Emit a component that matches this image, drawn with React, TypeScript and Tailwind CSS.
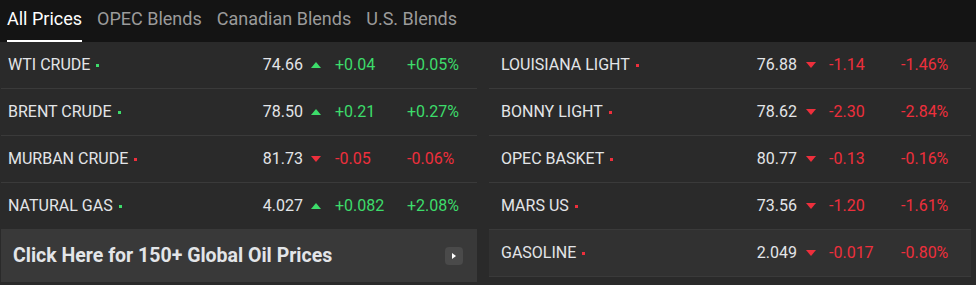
import React from "react";

type Quote = { name: string; price: string; change: string; pct: string; up: boolean };

const left: Quote[] = [
  { name: "WTI CRUDE", price: "74.66", change: "+0.04", pct: "+0.05%", up: true },
  { name: "BRENT CRUDE", price: "78.50", change: "+0.21", pct: "+0.27%", up: true },
  { name: "MURBAN CRUDE", price: "81.73", change: "-0.05", pct: "-0.06%", up: false },
  { name: "NATURAL GAS", price: "4.027", change: "+0.082", pct: "+2.08%", up: true },
];

const right: Quote[] = [
  { name: "LOUISIANA LIGHT", price: "76.88", change: "-1.14", pct: "-1.46%", up: false },
  { name: "BONNY LIGHT", price: "78.62", change: "-2.30", pct: "-2.84%", up: false },
  { name: "OPEC BASKET", price: "80.77", change: "-0.13", pct: "-0.16%", up: false },
  { name: "MARS US", price: "73.56", change: "-1.20", pct: "-1.61%", up: false },
  { name: "GASOLINE", price: "2.049", change: "-0.017", pct: "-0.80%", up: false },
];

const tabs = ["All Prices", "OPEC Blends", "Canadian Blends", "U.S. Blends"];

function Arrow({ up }: { up: boolean }) {
  return (
    <svg width="10" height="6" viewBox="0 0 10 6" className="shrink-0">
      {up ? <polygon points="0,6 5,0 10,6" fill="#3ddc6a" /> : <polygon points="0,0 10,0 5,6" fill="#ee2f3c" />}
    </svg>
  );
}

function Row({ q, side, highlight }: { q: Quote; side: "l" | "r"; highlight?: boolean }) {
  const color = q.up ? "text-[#3ddc6a]" : "text-[#ee2f3c]";
  const dot = q.up ? "bg-[#3ddc6a]" : "bg-[#ee2f3c]";
  return (
    <div
      className={`flex items-center h-[47px] border-b border-[#3a3a3a] text-[16px] ${
        highlight ? "bg-[#313131]" : ""
      } ${side === "l" ? "pl-[7px]" : "pl-[12px]"}`}
    >
      <div className="w-[200px] flex items-center text-[#e3e5e8]">
        {q.name}
        <span className={`ml-[6px] w-[3px] h-[3px] ${dot}`} />
      </div>
      <div className={`${side === "l" ? "w-[95px]" : "w-[96px]"} text-right text-[#e3e5e8]`}>{q.price}</div>
      <div className={side === "l" ? "ml-[8px]" : "ml-[9px]"}>
        <Arrow up={q.up} />
      </div>
      <div className={`${side === "l" ? "ml-[14px]" : "ml-[13px]"} w-[72px] ${color}`}>{q.change}</div>
      <div className={`w-[70px] ${color}`}>{q.pct}</div>
    </div>
  );
}

export default function App() {
  return (
    <div className="w-[976px] h-[285px] bg-[#2a2a2a] overflow-hidden" style={{ fontFamily: "Roboto, sans-serif" }}>
      {/* Tabs */}
      <div className="h-[42px] bg-[#141414] flex gap-[15px] pl-[7px] pt-[8px]">
        {tabs.map((t, i) => (
          <div
            key={t}
            className={`h-[34px] text-[18px] leading-[21px] ${
              i === 0 ? "text-white border-b-2 border-white" : "text-[#9b9b9b]"
            }`}
          >
            {t}
          </div>
        ))}
      </div>

      <div className="flex pl-[1px]">
        {/* Left column */}
        <div className="w-[476px]">
          {left.map((q) => (
            <Row key={q.name} q={q} side="l" />
          ))}
          <div className="h-[53px] -mt-[1px] bg-[#393939] flex items-center justify-between pl-[12px] pr-[14px]">
            <span className="text-[19.5px] font-bold text-[#e3e5e8]">Click Here for 150+ Global Oil Prices</span>
            <span className="w-[18px] h-[18px] rounded-[4px] bg-[#4a4a4a] flex items-center justify-center">
              <svg width="4" height="6" viewBox="0 0 4 6">
                <polygon points="0,0 4,3 0,6" fill="#ffffff" />
              </svg>
            </span>
          </div>
        </div>

        {/* Right column */}
        <div className="w-[482px] ml-[12px]">
          {right.map((q, i) => (
            <Row key={q.name} q={q} side="r" highlight={i === right.length - 1} />
          ))}
        </div>
      </div>
    </div>
  );
}
